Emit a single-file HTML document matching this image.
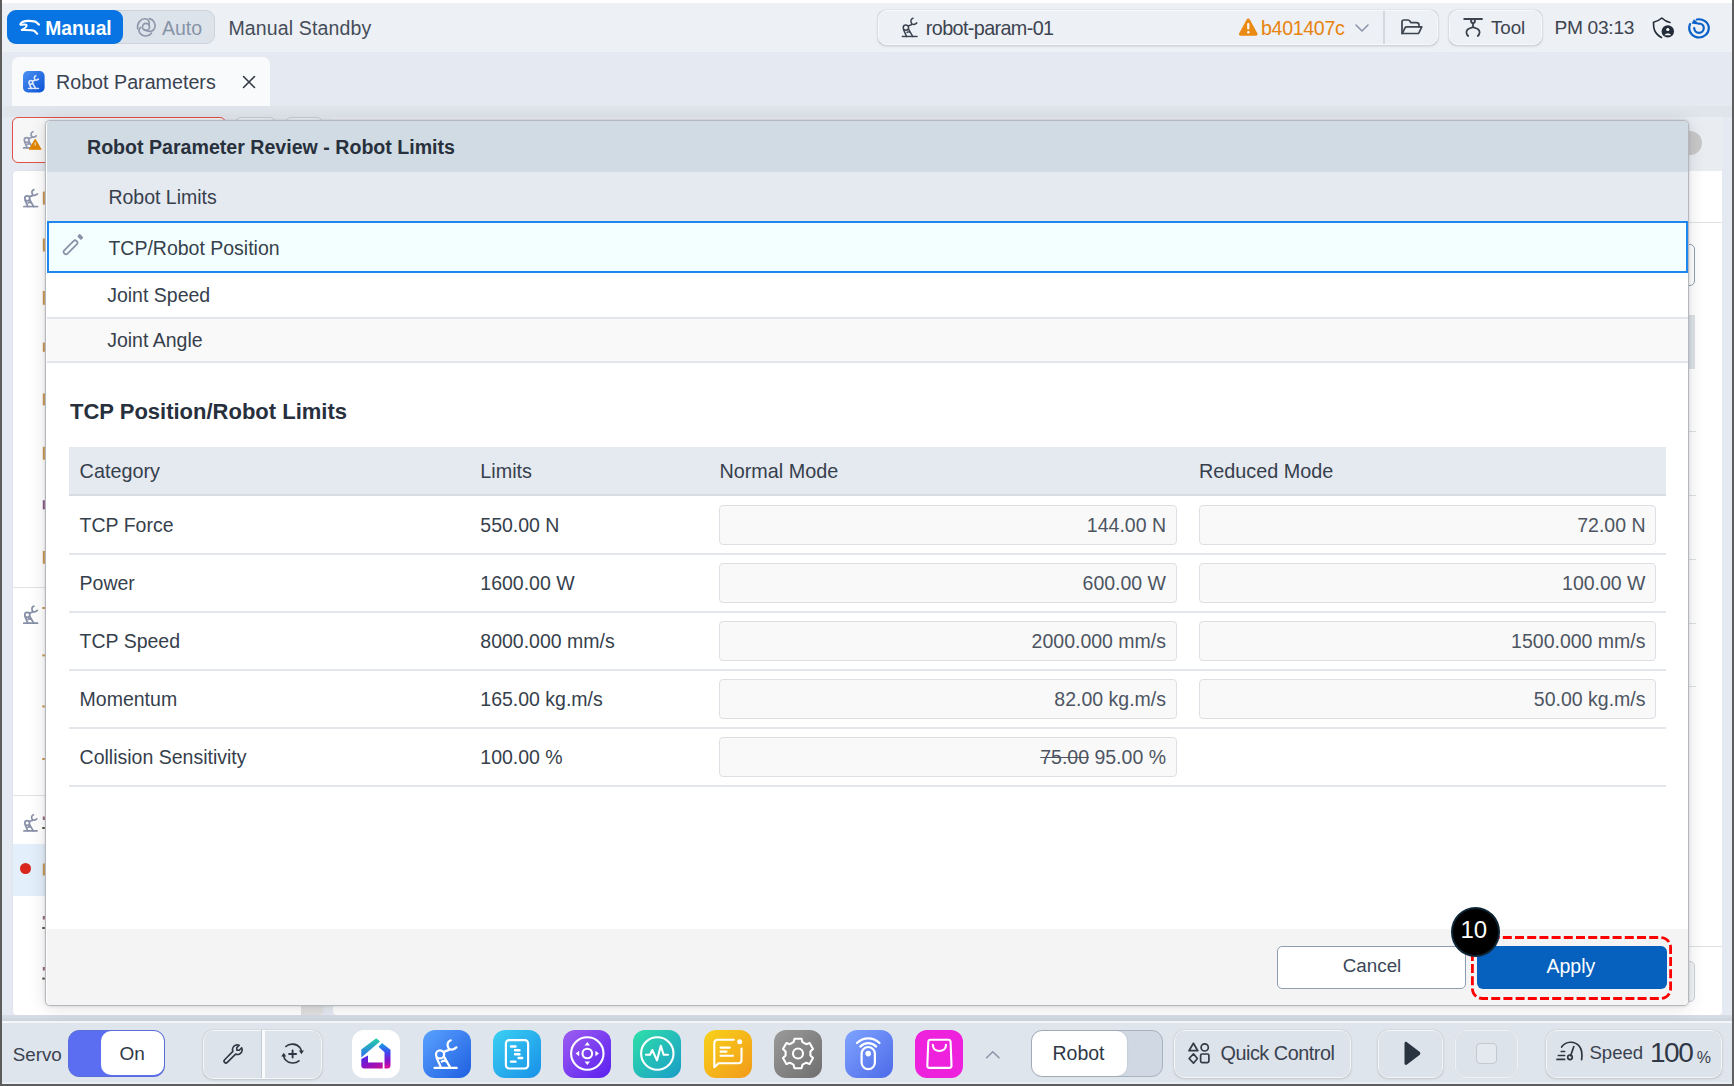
<!DOCTYPE html>
<html><head><meta charset="utf-8">
<style>
*{box-sizing:border-box;margin:0;padding:0}
html,body{width:1734px;height:1086px;overflow:hidden}
body{position:relative;background:#e5e9f1;font-family:"Liberation Sans",sans-serif;color:#2b3442}
.a{position:absolute}
.t{position:absolute;white-space:nowrap;line-height:1;font-size:19.5px}
.b{font-weight:bold}
svg{position:absolute;overflow:visible}
</style></head><body>
<!-- ===== frame ===== -->
<div class="a" style="left:0;top:0;width:1734px;height:52px;background:#edf0f4"></div>
<div class="a" style="left:0;top:0;width:1734px;height:3px;background:#ffffff"></div>
<div class="a" style="left:0;top:0;width:1.5px;height:1086px;background:#5c5c5c"></div>
<div class="a" style="left:1732px;top:0;width:2px;height:1086px;background:#5e5e5e"></div>

<!-- ===== top bar ===== -->
<div class="a" style="left:7px;top:10px;width:208px;height:34px;border-radius:9px;background:#dde3ea;border:1px solid #cdd3db"></div>
<div class="a" style="left:7px;top:10px;width:116px;height:34px;border-radius:9px;background:#0874e3"></div>
<div class="t b" style="left:45.3px;top:18.6px;font-size:19.3px;color:#fff">Manual</div>
<div class="t" style="left:162px;top:19px;font-size:19.5px;color:#8794a8">Auto</div>
<div class="t" style="left:228.4px;top:18.8px;font-size:19.5px;letter-spacing:0.15px;color:#454d5a">Manual Standby</div>

<div class="a" style="left:878px;top:10px;width:560px;height:35px;border-radius:8px;background:#edf0f4;border:1.5px solid #f7f9fb;box-shadow:0 0 1px rgba(0,0,0,.25),0 1px 3px rgba(0,0,0,.15)"></div>
<div class="a" style="left:1383px;top:11px;width:2px;height:33px;background:#d4d9e0"></div>
<div class="t" style="left:925.8px;top:19px;font-size:19.8px;letter-spacing:-0.62px;color:#3d4450">robot-param-01</div>
<div class="t" style="left:1261px;top:18.9px;font-size:19.6px;letter-spacing:-0.33px;color:#e8830f">b401407c</div>

<div class="a" style="left:1449px;top:10px;width:93px;height:35px;border-radius:8px;background:#edf0f4;border:1.5px solid #f7f9fb;box-shadow:0 0 1px rgba(0,0,0,.25),0 1px 3px rgba(0,0,0,.15)"></div>
<div class="t" style="left:1491px;top:19.3px;font-size:18.8px;letter-spacing:-0.1px;color:#3d4450">Tool</div>
<div class="t" style="left:1554.4px;top:18.1px;font-size:19.2px;letter-spacing:-0.3px;color:#3d4450">PM 03:13</div>

<!-- ===== tab ===== -->
<div class="a" style="left:12px;top:57px;width:258px;height:49px;border-radius:7px 7px 0 0;background:#f9fafb"></div>
<div class="t" style="left:56px;top:72.8px;font-size:19.7px;color:#3a4250">Robot Parameters</div>

<!-- ===== background content ===== -->
<div class="a" style="left:3px;top:106px;width:1729px;height:11px;background:#e0e4eb"></div>
<!-- left list card -->
<div class="a" style="left:13px;top:171px;width:310px;height:844px;background:#ffffff;border-radius:4px;box-shadow:0 0 2px rgba(0,0,0,.08)"></div>
<div class="a" style="left:13px;top:587px;width:310px;height:1px;background:#dfe3e8"></div>
<div class="a" style="left:13px;top:795px;width:310px;height:1px;background:#dfe3e8"></div>
<div class="a" style="left:13px;top:844px;width:310px;height:52px;background:#e3effa"></div>
<div class="a" style="left:20px;top:863px;width:11px;height:11px;border-radius:50%;background:#d9261c"></div>
<!-- red item -->
<div class="a" style="left:12px;top:117px;width:214px;height:46px;border-radius:6px;background:#f7f7f7;border:1.8px solid #e05248"></div>
<div class="a" style="left:235px;top:117px;width:41px;height:46px;border-radius:6px;background:#eef1f5;border:1px solid #c8ced6"></div>
<div class="a" style="left:285px;top:117px;width:38px;height:46px;border-radius:6px;background:#eef1f5;border:1px solid #c8ced6"></div>
<div class="a" style="left:301px;top:985px;width:22px;height:30px;background:#e0e0e0;border-radius:0 0 4px 0"></div>
<!-- right panel -->
<div class="a" style="left:333px;top:117px;width:1389px;height:898px;background:#ffffff;border-radius:4px"></div>
<div class="a" style="left:333px;top:117px;width:1389px;height:54px;background:#e9ecf1;border-radius:4px 4px 0 0"></div>
<div class="a" style="left:1678px;top:131px;width:24px;height:24px;border-radius:50%;background:#c8c8c8"></div>
<div class="a" style="left:333px;top:222px;width:1389px;height:1px;background:#e0e4e9"></div>
<div class="a" style="left:1660px;top:244px;width:35px;height:42px;border:1.5px solid #8fa0b5;border-radius:5px;background:#fff"></div>
<div class="a" style="left:1660px;top:315px;width:35px;height:54px;background:#dde2e8"></div>
<div class="a" style="left:1660px;top:431px;width:36px;height:1px;background:#dde1e6"></div>
<div class="a" style="left:1660px;top:495px;width:36px;height:1px;background:#dde1e6"></div>
<div class="a" style="left:1660px;top:558.5px;width:36px;height:1px;background:#dde1e6"></div>
<div class="a" style="left:1660px;top:623px;width:36px;height:1px;background:#dde1e6"></div>
<div class="a" style="left:1660px;top:686px;width:36px;height:1px;background:#dde1e6"></div>
<div class="a" style="left:1660px;top:946px;width:62px;height:1px;background:#dde1e6"></div>
<div class="a" style="left:1660px;top:961px;width:35px;height:41px;border:1px solid #ccd2da;border-radius:5px;background:#f2f3f5"></div>

<!-- bg icons -->
<svg width="1734" height="1086" style="left:0;top:0" viewBox="0 0 1734 1086">
<defs>
<symbol id="rbb" viewBox="-1 -1 17 21"><g fill="none" stroke="currentColor" stroke-width="1.9" stroke-linecap="round" stroke-linejoin="round">
<path d="M0,18.8H14.8"/><circle cx="3.7" cy="9.8" r="2.7"/><path d="M1.4,12 L4.4,18.8 M6.3,11.3 L10.6,18.8 M4.8,14.6 Q6.6,13.4 8,14.6"/>
<path d="M6.1,8.2 C7.4,7.4 8.6,7.1 9.6,6.8"/><path d="M10.8,0.4 C8.6,1.1 8.1,3.6 9.4,5.6 C10.6,7.2 12.7,6.8 14.6,5.1"/></g></symbol>
</defs>
<use href="#rbb" x="22.5" y="130.5" width="15" height="18.5" style="color:#8f98ae"/>
<path d="M35.2,139.6 L40.9,149.2 H29.5 Z" fill="#e08400" stroke="#e08400" stroke-width="1.2" stroke-linejoin="round"/>
<rect x="34.6" y="142.3" width="1.2" height="3.5" fill="#f6d9a8"/>
<use href="#rbb" x="22.8" y="188.3" width="16" height="19.5" style="color:#8890a8"/>
<use href="#rbb" x="22.8" y="604.8" width="16" height="19.5" style="color:#8890a8"/>
<use href="#rbb" x="22.8" y="813.5" width="15.5" height="18.5" style="color:#8890a8"/>
<g fill="#c99752">
<rect x="42.8" y="191.6" width="2" height="13"/>
<rect x="42.8" y="238.5" width="2" height="13"/>
<rect x="42.8" y="291" width="2" height="13.8"/>
<rect x="42.8" y="342.6" width="2" height="9.2"/>
<rect x="42.8" y="393.4" width="2" height="12"/>
<rect x="42.8" y="446.8" width="2" height="12.9"/>
<rect x="42.8" y="500.2" width="2" height="9.2" fill="#8a5a8a"/>
<rect x="42.8" y="550.9" width="2" height="12.9"/>
<rect x="42.3" y="607" width="2.5" height="2"/>
<rect x="42.3" y="654.4" width="2.5" height="2"/>
<rect x="42.3" y="705.4" width="2.5" height="2"/>
<rect x="42.3" y="758" width="2.5" height="2"/>
<rect x="42.8" y="816.5" width="2" height="3.5" fill="#9a6a7a"/>
<rect x="42.3" y="827" width="2.5" height="2" fill="#554"/>
<rect x="42.8" y="863.5" width="2" height="12"/>
<rect x="42.8" y="916" width="2" height="3.5" fill="#9a6a7a"/>
<rect x="42.3" y="927" width="2.5" height="2" fill="#554"/>
<rect x="42.8" y="967" width="2" height="3.5" fill="#9a6a7a"/>
<rect x="42.3" y="977.6" width="2.5" height="2" fill="#554"/>
</g>
</svg>
<!-- end bg -->
<!-- ===== bottom bar ===== -->
<div class="a" style="left:2px;top:1015px;width:1730px;height:6px;background:linear-gradient(#d9dee6,#ccd3dc)"></div>
<div class="a" style="left:2px;top:1021px;width:1730px;height:2px;background:#f4f6f9"></div>
<div class="a" style="left:2px;top:1023px;width:1730px;height:61px;background:#dfe5ec"></div>
<div class="a" style="left:2px;top:1082px;width:1730px;height:2px;background:#e9eef4"></div>
<div class="a" style="left:0;top:1084.2px;width:1734px;height:1.8px;background:#5e5e5e"></div>

<!-- ===== MODAL ===== -->
<div id="modal" class="a" style="left:45px;top:120px;width:1644px;height:886px;background:#fff;border:1.5px solid #b4b8be;border-radius:5px;overflow:hidden;box-shadow:0 0 3px rgba(0,0,0,.15),0 2px 18px rgba(0,0,0,.12)">
</div>
<!-- bottom inner -->
<div class="t" style="left:12.7px;top:1046px;font-size:18.8px;color:#3a4250">Servo</div>
<div class="a" style="left:67.5px;top:1029.5px;width:97px;height:47px;border-radius:11px;background:#5b6ef2;border:1.5px solid #5a6cd8"></div>
<div class="a" style="left:101px;top:1031px;width:62.5px;height:44px;border-radius:10px;background:#fff"></div>
<div class="t" style="left:119.6px;top:1044.2px;font-size:19px;color:#2f3846">On</div>
<div class="a" style="left:203px;top:1029.5px;width:118.5px;height:49px;border-radius:10px;background:#dde3ea;border:1.5px solid #f3f6f9;box-shadow:0 0 1px rgba(0,0,0,.25),0 1px 3px rgba(0,0,0,.12)"></div>
<div class="a" style="left:260.5px;top:1030px;width:4px;height:48px;background:#fafbfc;border-left:1.5px solid #c2c9d2"></div>
<div class="a" style="left:352px;top:1029.5px;width:48px;height:48px;border-radius:12px;background:#ffffff"></div>
<div class="a" style="left:422.5px;top:1029.5px;width:48px;height:48px;border-radius:12px;background:linear-gradient(135deg,#5aa2ff,#1f5fe0)"></div>
<div class="a" style="left:493px;top:1029.5px;width:48px;height:48px;border-radius:12px;background:linear-gradient(135deg,#3ad0f2,#1890e8)"></div>
<div class="a" style="left:563px;top:1029.5px;width:48px;height:48px;border-radius:12px;background:linear-gradient(135deg,#9d5ef0,#5a1ff0)"></div>
<div class="a" style="left:633px;top:1029.5px;width:48px;height:48px;border-radius:12px;background:linear-gradient(135deg,#2fe0a8,#1a9cc8)"></div>
<div class="a" style="left:703.5px;top:1029.5px;width:48px;height:48px;border-radius:12px;background:linear-gradient(135deg,#f8d21a,#f29a1a)"></div>
<div class="a" style="left:774px;top:1029.5px;width:48px;height:48px;border-radius:12px;background:linear-gradient(135deg,#9a9a9a,#6f6f6f)"></div>
<div class="a" style="left:844.5px;top:1029.5px;width:48px;height:48px;border-radius:12px;background:linear-gradient(135deg,#7fa4ff,#4d6ae8)"></div>
<div class="a" style="left:915px;top:1029.5px;width:48px;height:48px;border-radius:12px;background:#ee22dd"></div>
<div class="a" style="left:1031px;top:1030px;width:131.5px;height:46.5px;border-radius:11px;background:#cfd8e3;border:1.5px solid #a9b3c0"></div>
<div class="a" style="left:1032px;top:1031px;width:95px;height:44.5px;border-radius:10px;background:#fff;box-shadow:0 0 2px rgba(0,0,0,.15)"></div>
<div class="t" style="left:1052.5px;top:1044px;font-size:19.5px;color:#2f3846">Robot</div>
<div class="a" style="left:1174px;top:1029.5px;width:177px;height:48.5px;border-radius:10px;background:#dde3ea;border:1.5px solid #f3f6f9;box-shadow:0 0 1px rgba(0,0,0,.25),0 1px 3px rgba(0,0,0,.12)"></div>
<div class="t" style="left:1220.5px;top:1044.2px;font-size:19.8px;letter-spacing:-0.45px;color:#3a4250">Quick Control</div>
<div class="a" style="left:1378px;top:1029.5px;width:65px;height:48.5px;border-radius:10px;background:#dde3ea;border:1.5px solid #f3f6f9;box-shadow:0 0 1px rgba(0,0,0,.25),0 1px 3px rgba(0,0,0,.12)"></div>
<div class="a" style="left:1455px;top:1029.5px;width:63px;height:48.5px;border-radius:10px;background:#dde3ea;border:1.5px solid #eef1f5;box-shadow:0 0 1px rgba(0,0,0,.12)"></div>
<div class="a" style="left:1476px;top:1043px;width:21px;height:21px;border-radius:4px;border:1.5px solid #c2c9d2;background:#e4e9ef"></div>
<div class="a" style="left:1546px;top:1029.5px;width:175.5px;height:48.5px;border-radius:10px;background:#dde3ea;border:1.5px solid #f3f6f9;box-shadow:0 0 1px rgba(0,0,0,.25),0 1px 3px rgba(0,0,0,.12)"></div>
<div class="t" style="left:1589.4px;top:1043.7px;font-size:18.6px;color:#3a4250">Speed</div>
<div class="t" style="left:1650px;top:1038.6px;font-size:28px;letter-spacing:-1.5px;color:#2f3846">100</div>
<div class="t" style="left:1696.8px;top:1049.6px;font-size:16px;color:#3a4250">%</div>
<!-- end bottom -->
<!-- modal inner -->
<div class="a" style="left:47px;top:121px;width:1641px;height:51px;background:#d1dbe3;border-radius:4px 4px 0 0"></div>
<div class="t b" style="left:87px;top:137.6px;font-size:19.6px;color:#27303c">Robot Parameter Review - Robot Limits</div>
<div class="a" style="left:47px;top:172px;width:1641px;height:49px;background:#e5e9f0"></div>
<div class="t" style="left:108.4px;top:187.6px;color:#363f4c">Robot Limits</div>
<div class="a" style="left:47px;top:221px;width:1641px;height:52px;background:#f3fffe;border:2px solid #1d87ef"></div>
<div class="t" style="left:108.4px;top:239.1px;color:#363f4c">TCP/Robot Position</div>
<div class="t" style="left:107.2px;top:286.4px;color:#363f4c">Joint Speed</div>
<div class="a" style="left:47px;top:317px;width:1641px;height:2px;background:#e1e5ea"></div>
<div class="a" style="left:47px;top:319px;width:1641px;height:42px;background:#f9f9f9"></div>
<div class="t" style="left:107.2px;top:330.6px;color:#363f4c">Joint Angle</div>
<div class="a" style="left:47px;top:361px;width:1641px;height:2px;background:#e1e5ea"></div>
<div class="t b" style="left:70px;top:401.1px;font-size:22px;color:#27303c">TCP Position/Robot Limits</div>
<div class="a" style="left:69px;top:447px;width:1597px;height:49px;background:#e5e9f0;border-bottom:2px solid #d8dde4"></div>
<div class="t" style="left:79.6px;top:461.7px;font-size:19.8px;color:#363f4c">Category</div>
<div class="t" style="left:480.3px;top:461.7px;font-size:19.8px;color:#363f4c">Limits</div>
<div class="t" style="left:719.5px;top:461.7px;font-size:19.8px;color:#363f4c">Normal Mode</div>
<div class="t" style="left:1199px;top:461.7px;font-size:19.8px;color:#363f4c">Reduced Mode</div>
<div class="a" style="left:69px;top:553px;width:1597px;height:2px;background:#e3e7ec"></div>
<div class="t" style="left:79.6px;top:516.1px;color:#363f4c">TCP Force</div>
<div class="t" style="left:480.3px;top:516.1px;color:#363f4c">550.00 N</div>
<div class="a" style="left:718.5px;top:505px;width:458px;height:40px;background:#f9f9f9;border:1.5px solid #dce0e5;border-radius:4px"></div>
<div class="a" style="left:1198.5px;top:505px;width:457px;height:40px;background:#f9f9f9;border:1.5px solid #dce0e5;border-radius:4px"></div>
<div class="t" style="right:568px;top:516.1px;color:#4d5562">144.00 N</div>
<div class="t" style="right:88.5px;top:516.1px;color:#4d5562">72.00 N</div>
<div class="a" style="left:69px;top:611px;width:1597px;height:2px;background:#e3e7ec"></div>
<div class="t" style="left:79.6px;top:574.1px;color:#363f4c">Power</div>
<div class="t" style="left:480.3px;top:574.1px;color:#363f4c">1600.00 W</div>
<div class="a" style="left:718.5px;top:563px;width:458px;height:40px;background:#f9f9f9;border:1.5px solid #dce0e5;border-radius:4px"></div>
<div class="a" style="left:1198.5px;top:563px;width:457px;height:40px;background:#f9f9f9;border:1.5px solid #dce0e5;border-radius:4px"></div>
<div class="t" style="right:568px;top:574.1px;color:#4d5562">600.00 W</div>
<div class="t" style="right:88.5px;top:574.1px;color:#4d5562">100.00 W</div>
<div class="a" style="left:69px;top:669px;width:1597px;height:2px;background:#e3e7ec"></div>
<div class="t" style="left:79.6px;top:632.1px;color:#363f4c">TCP Speed</div>
<div class="t" style="left:480.3px;top:632.1px;color:#363f4c">8000.000 mm/s</div>
<div class="a" style="left:718.5px;top:621px;width:458px;height:40px;background:#f9f9f9;border:1.5px solid #dce0e5;border-radius:4px"></div>
<div class="a" style="left:1198.5px;top:621px;width:457px;height:40px;background:#f9f9f9;border:1.5px solid #dce0e5;border-radius:4px"></div>
<div class="t" style="right:568px;top:632.1px;color:#4d5562">2000.000 mm/s</div>
<div class="t" style="right:88.5px;top:632.1px;color:#4d5562">1500.000 mm/s</div>
<div class="a" style="left:69px;top:727px;width:1597px;height:2px;background:#e3e7ec"></div>
<div class="t" style="left:79.6px;top:690.1px;color:#363f4c">Momentum</div>
<div class="t" style="left:480.3px;top:690.1px;color:#363f4c">165.00 kg.m/s</div>
<div class="a" style="left:718.5px;top:679px;width:458px;height:40px;background:#f9f9f9;border:1.5px solid #dce0e5;border-radius:4px"></div>
<div class="a" style="left:1198.5px;top:679px;width:457px;height:40px;background:#f9f9f9;border:1.5px solid #dce0e5;border-radius:4px"></div>
<div class="t" style="right:568px;top:690.1px;color:#4d5562">82.00 kg.m/s</div>
<div class="t" style="right:88.5px;top:690.1px;color:#4d5562">50.00 kg.m/s</div>
<div class="a" style="left:69px;top:785px;width:1597px;height:2px;background:#e3e7ec"></div>
<div class="t" style="left:79.6px;top:748.1px;color:#363f4c">Collision Sensitivity</div>
<div class="t" style="left:480.3px;top:748.1px;color:#363f4c">100.00 %</div>
<div class="a" style="left:718.5px;top:737px;width:458px;height:40px;background:#f9f9f9;border:1.5px solid #dce0e5;border-radius:4px"></div>
<div class="t" style="right:568px;top:748.1px;color:#4d5562"><span style="text-decoration:line-through">75.00</span> 95.00 %</div>
<div class="a" style="left:47px;top:929px;width:1641px;height:76px;background:#f4f4f4;border-radius:0 0 4px 4px"></div>
<div class="a" style="left:1277px;top:945.5px;width:189px;height:43px;background:#fff;border:1.5px solid #8e9db0;border-radius:5px"></div>
<div class="t" style="left:1342.8px;top:957px;font-size:18.8px;color:#3b4758">Cancel</div>
<div class="a" style="left:1477px;top:945.5px;width:190px;height:43px;background:#0660be;border-radius:6px"></div>
<div class="t" style="left:1546.5px;top:957.1px;font-size:19.5px;color:#fff">Apply</div>
<svg width="1734" height="1086" style="left:0;top:0"><rect x="1472.4" y="937.5" width="198.2" height="61" rx="10" fill="none" stroke="#ff0000" stroke-width="2.8" stroke-dasharray="9 3.2" stroke-dashoffset="4"/></svg>
<div class="a" style="left:1451px;top:907px;width:48.5px;height:49.5px;border-radius:50%;background:#000;border:2px solid #0e2535"></div>
<div class="t" style="left:1460.5px;top:918px;font-size:24px;color:#fff">10</div>
<!-- end modal -->
<!-- fg icons -->
<svg width="1734" height="1086" style="left:0;top:0" viewBox="0 0 1734 1086">
<defs>
<symbol id="rb" viewBox="-1 -1 17 21"><g fill="none" stroke="currentColor" stroke-width="1.5" stroke-linecap="round" stroke-linejoin="round">
<path d="M0,18.8H14.8"/><circle cx="3.7" cy="9.8" r="2.7"/><path d="M1.4,12 L4.4,18.8 M6.3,11.3 L10.6,18.8 M4.8,14.6 Q6.6,13.4 8,14.6"/>
<path d="M6.1,8.2 C7.4,7.4 8.6,7.1 9.6,6.8"/><path d="M10.8,0.4 C8.6,1.1 8.1,3.6 9.4,5.6 C10.6,7.2 12.7,6.8 14.6,5.1"/></g></symbol>
<symbol id="rbt" viewBox="-1 -1 17 21"><g fill="none" stroke="currentColor" stroke-width="2.3" stroke-linecap="round" stroke-linejoin="round">
<path d="M0,18.8H14.8"/><circle cx="3.7" cy="9.8" r="2.7"/><path d="M1.4,12 L4.4,18.8 M6.3,11.3 L10.6,18.8"/>
<path d="M6.1,8.2 C7.4,7.4 8.6,7.1 9.6,6.8"/><path d="M10.8,0.4 C8.6,1.1 8.1,3.6 9.4,5.6 C10.6,7.2 12.7,6.8 14.6,5.1"/></g></symbol>
<linearGradient id="gTab" x1="0" y1="0" x2="1" y2="1"><stop offset="0" stop-color="#4e93f2"/><stop offset="1" stop-color="#0850d6"/></linearGradient>
<linearGradient id="gHome1" x1="0" y1="0" x2="0" y2="1"><stop offset="0" stop-color="#22d0a8"/><stop offset="1" stop-color="#2f6af0"/></linearGradient>
<linearGradient id="gHome2" x1="0" y1="0" x2="0" y2="1"><stop offset="0" stop-color="#1aa6e0"/><stop offset="0.35" stop-color="#3b4cf0"/><stop offset="0.7" stop-color="#8a10c8"/><stop offset="1" stop-color="#e0109a"/></linearGradient>
<linearGradient id="gHome3" x1="0" y1="0" x2="1" y2="1"><stop offset="0" stop-color="#3a30f0"/><stop offset="0.5" stop-color="#8a10c4"/><stop offset="1" stop-color="#c8109a"/></linearGradient>
</defs>

<!-- Manual hand icon -->
<g fill="none" stroke="#fff" stroke-width="2.1" stroke-linecap="round" stroke-linejoin="round">
<path d="M20.3,24.3 C21.5,21.5 25,20.8 29,20.9 C31.5,21 33.5,21.3 35.5,21.6 L39,24.6"/>
<path d="M21,24.8 C23,24.6 26,24.2 26.5,25 C27,26.2 24.5,28.5 21.8,30 C26,30.2 31.5,29.8 34.5,31 L37.2,33.7"/>
</g>
<!-- Auto icon -->
<g fill="none" stroke="#8c96a9" stroke-width="1.6" stroke-linecap="round">
<circle cx="146" cy="26.9" r="3.5"/>
<path d="M137.6,28.8 C136.8,22.5 141,18.6 145.2,18.8 C148.5,19 150,22 148.9,25.2"/>
<path d="M149.3,18.6 C153.5,19.6 155.8,23.5 154.8,27.8 C153.8,31.3 149.5,32.8 144.6,29.6"/>
<path d="M151.5,33.2 C148.7,36.8 142.8,37 140.2,33.6 C138.5,31.3 139,28.8 140.8,27.4"/>
</g>
<!-- top bar robot -->
<use href="#rb" x="901.2" y="16.8" width="17" height="21" style="color:#3a4250"/>
<!-- warning triangle -->
<path d="M1248.3,18.5 C1249,18.5 1249.4,18.9 1249.8,19.5 L1257.3,33.3 C1257.9,34.5 1257.2,35.8 1255.8,35.8 L1240.7,35.8 C1239.3,35.8 1238.6,34.5 1239.2,33.3 L1246.7,19.5 C1247.1,18.9 1247.6,18.5 1248.3,18.5Z" fill="#ea8a12"/>
<rect x="1247.2" y="23" width="2.2" height="6.5" rx="1" fill="#fff"/><circle cx="1248.3" cy="32.2" r="1.2" fill="#fff"/>
<!-- chevron -->
<path d="M1356,25 L1362,31 L1368,25" fill="none" stroke="#8a93a8" stroke-width="1.5" stroke-linecap="round" stroke-linejoin="round"/>
<!-- folder -->
<g fill="none" stroke="#3d4450" stroke-width="1.7" stroke-linejoin="round" stroke-linecap="round">
<path d="M401.5,34 L401.5,22.5 C401.5,21 402.5,20 404,20 L1407.5,20" transform="translate(0,0)" style="display:none"/>
<path d="M1402,33.5 V22 C1402,20.8 1402.8,20 1404,20 H1408 C1409,20 1409.5,20.5 1410,21.3 L1410.8,22.6 H1416.5 C1418,22.6 1419,23.6 1419,25 V27"/>
<path d="M1402.3,33.5 L1405,27.8 C1405.4,27 1406,26.8 1406.8,26.8 H1421.8 L1418.6,33.5 Z"/>
</g>
<!-- tool gripper -->
<g fill="none" stroke="#3d4450" stroke-width="1.8" stroke-linecap="round" stroke-linejoin="round">
<path d="M1464.2,19 H1482"/><circle cx="1473" cy="21" r="2"/><path d="M1473,23 V27"/>
<path d="M1468.2,36 C1465.8,33.8 1465.8,30.8 1468.2,29 L1473,27.2 L1477.8,29 C1480.2,30.8 1480.2,33.8 1477.8,36"/>
</g>
<!-- shield user -->
<g fill="none" stroke="#222b38" stroke-width="1.6" stroke-linejoin="round" stroke-linecap="round">
<path d="M1670,22.5 C1667,22 1664.5,20.5 1661.8,18 C1659,20.5 1656.5,21.8 1653.5,22.3 C1653.5,27 1653.3,33 1661.5,37.5"/>
</g>
<circle cx="1667.8" cy="31.4" r="6.2" fill="#222b38"/>
<circle cx="1667.8" cy="29.5" r="1.6" fill="#fff"/><path d="M1664.6,35.2 C1665.2,32.8 1670.4,32.8 1671,35.2 Z" fill="#fff"/>
<!-- blue sync icon -->
<g fill="none" stroke="#0a62c8" stroke-width="2.2" stroke-linecap="round">
<path d="M1696.8,19.5 C1702.5,18.3 1708.8,22 1708.8,28 C1708.8,33.5 1704.3,37.5 1699,37.5 C1693.6,37.5 1689.2,33.2 1689.2,28 C1689.2,26.6 1689.5,25.3 1690,24.1"/>
<path d="M1698.8,23.5 C1701.8,23.3 1703.8,25.5 1703.8,28 C1703.8,30.7 1701.6,32.8 1699,32.8 C1696.3,32.8 1694.2,30.6 1694.2,28"/>
</g>
<path d="M1694,19.2 L1700,24.8 L1691.5,23.6 Z" fill="#0a62c8"/>

<!-- tab icon -->
<rect x="23" y="71" width="21.6" height="21.4" rx="5" fill="url(#gTab)"/>
<use href="#rbt" x="27.6" y="74.8" width="11.8" height="14.6" style="color:#dce7fb"/>
<!-- close X -->
<path d="M243.5,76.5 L254.5,87.5 M254.5,76.5 L243.5,87.5" stroke="#333a44" stroke-width="1.6" stroke-linecap="round"/>

<!-- pencil -->
<rect x="61.75" y="245" width="17.5" height="4.6" rx="2.2" transform="rotate(-45 70.5 247.3)" fill="none" stroke="#8890a8" stroke-width="1.7"/>
<rect x="77.6" y="235.1" width="5.4" height="3.6" rx="0.9" transform="rotate(45 80.3 236.9)" fill="#8890a8"/>
<!-- wrench -->
<path d="M239.2,1045.3 C236.8,1044.2 233.8,1045.2 232.8,1047.8 C232.3,1049 232.4,1050.3 232.9,1051.4 L224.6,1059.7 C223.8,1060.5 223.8,1061.6 224.6,1062.4 C225.4,1063.2 226.5,1063.2 227.3,1062.4 L235.6,1054.1 C236.7,1054.6 238,1054.7 239.2,1054.2 C241.8,1053.2 242.8,1050.2 241.7,1047.8 L239.2,1050.3 L236.9,1050.1 L236.7,1047.8 Z" fill="none" stroke="#2e3642" stroke-width="1.6" stroke-linejoin="round"/>
<!-- rotate plus -->
<g fill="none" stroke="#2e3642" stroke-width="1.6" stroke-linecap="round">
<path d="M285.8,1046.5 C289.5,1043 296.5,1043.3 299.8,1047.5 C300.8,1048.8 301.3,1050 301.5,1051.3"/>
<path d="M299,1060.8 C295.3,1064 289,1063.8 285.6,1060 C284.5,1058.8 284,1057.5 283.7,1056"/>
<path d="M292.6,1050.5 V1057.5 M289.1,1054 H296.1" stroke-width="1.9"/>
</g>
<path d="M298.9,1050.5 L304,1050.5 L301.4,1054.2 Z M281.2,1056.5 L286.3,1056.5 L283.7,1052.8 Z" fill="#2e3642"/>

<!-- app: home -->
<path d="M361.3,1049.6 L375.2,1038.9 Q376.3,1038.2 377.3,1039 L380,1041.6 L361.3,1057.6 Z" fill="url(#gHome1)"/>
<path d="M382,1043.1 L390.5,1049.8 V1065.2 Q390.5,1068.5 387.3,1068.5 H384.5 V1052.3 L378.5,1046.7 Z" fill="url(#gHome2)"/>
<path d="M361.3,1059 L368,1055.6 V1062.5 H382.7 V1068.5 H364.5 Q361.3,1068.5 361.3,1065.3 Z" fill="url(#gHome3)"/>
<!-- app: robot -->
<use href="#rb" x="433" y="1038.2" width="25.5" height="31.5" style="color:#fff"/>
<!-- app: doc -->
<g fill="none" stroke="#fff" stroke-width="2.2" stroke-linecap="round">
<rect x="505.9" y="1040.2" width="22.2" height="28.3" rx="3.2"/>
<path d="M511,1046.5 H515.5 M515,1050.3 H519.5 M515,1054.2 H519.5 M518.6,1058 H522.2 M511,1061.6 H515.5" stroke-width="2.4"/>
</g>
<!-- app: joystick -->
<g fill="none" stroke="#fff" stroke-width="2.1">
<circle cx="587.3" cy="1053.5" r="16.2"/><circle cx="587.3" cy="1053.5" r="4.8"/>
</g>
<path d="M587.3,1042 L590,1045.5 H584.6Z M587.3,1065 L590,1061.5 H584.6Z M575.7,1053.5 L579.2,1050.8 V1056.2Z M598.9,1053.5 L595.4,1050.8 V1056.2Z" fill="#fff"/>
<!-- app: monitor -->
<g fill="none" stroke="#fff" stroke-width="2.1" stroke-linecap="round" stroke-linejoin="round">
<circle cx="657.3" cy="1053.5" r="16.2"/>
<path d="M646,1054.7 H650 L652.3,1050 L657,1060.4 L660.8,1045.7 L663.6,1054.7 H668"/>
</g>
<!-- app: chat -->
<g fill="none" stroke="#fff" stroke-width="2.1" stroke-linecap="round" stroke-linejoin="round">
<path d="M733.8,1039.8 H717.6 C715.3,1039.8 714.3,1041 714.3,1043.3 V1067.3 L718.6,1063.3 H738.2 C740.2,1063.3 741.5,1062 741.5,1060 V1048.5"/>
<path d="M720.5,1047.6 H729.8 M720.5,1051.6 H726.5 M720.5,1055.8 H733"/>
</g>
<circle cx="739.7" cy="1041.7" r="2.5" fill="#fff"/>
<!-- app: settings gear -->
<g fill="none" stroke="#fff" stroke-width="2.1" stroke-linejoin="round">
<path d="M794.5,1040.5 H801.5 L802.5,1044 L806.2,1046 L809.6,1044.8 L813,1050.8 L810.4,1053.3 V1057.2 L813,1059.7 L809.6,1065.7 L806.2,1064.5 L802.5,1066.5 L801.5,1070 H794.5 L793.5,1066.5 L789.8,1064.5 L786.4,1065.7 L783,1059.7 L785.6,1057.2 V1053.3 L783,1050.8 L786.4,1044.8 L789.8,1046 L793.5,1044 Z" transform="translate(0,-1.8)"/>
<circle cx="798" cy="1053.5" r="5"/>
</g>
<!-- app: remote -->
<g fill="none" stroke="#fff" stroke-width="2.2" stroke-linecap="round">
<path d="M857,1043 C863.5,1036.8 873,1036.8 879.5,1043"/>
<path d="M860.3,1046.6 C865,1042 871.5,1042 876.2,1046.6"/>
<rect x="861.6" y="1047" width="13.3" height="22.2" rx="6.65"/>
</g>
<circle cx="868.2" cy="1053.6" r="2.8" fill="#fff"/>
<!-- app: bag -->
<g fill="none" stroke="#fff" stroke-width="2.1" stroke-linecap="round" stroke-linejoin="round">
<path d="M928.3,1042 C928.3,1040.6 929.2,1039.7 930.6,1039.7 H948.3 C949.7,1039.7 950.5,1040.6 950.6,1042 L951.5,1065.5 C951.6,1067 950.7,1067.9 949.2,1067.9 H929.5 C928,1067.9 927.2,1067 927.3,1065.5 Z"/>
<path d="M932.8,1044.7 C932.8,1053 946,1053 946,1044.7"/>
</g>
<!-- chevron up -->
<path d="M986.6,1057.8 L992.8,1051.8 L999,1057.8" fill="none" stroke="#8d96a8" stroke-width="1.6" stroke-linecap="round" stroke-linejoin="round"/>
<!-- quick control -->
<g fill="none" stroke="#333b47" stroke-width="1.7" stroke-linejoin="round">
<path d="M1193.4,1043.3 L1197.8,1050.7 H1189 Z"/>
<circle cx="1204.7" cy="1047.4" r="3.6"/>
<path d="M1193.3,1053.9 L1197.2,1058.5 L1193.3,1063.2 L1188.9,1058.5 Z" transform="translate(0.2,0)"/>
<rect x="1200.6" y="1054" width="8.3" height="8.6" rx="1.5"/>
</g>
<!-- play -->
<path d="M1404.5,1043.5 C1404.5,1042 1405.8,1041.4 1407,1042.2 L1419.5,1051.8 C1420.6,1052.6 1420.6,1054.2 1419.5,1055 L1407,1064.6 C1405.8,1065.4 1404.5,1064.8 1404.5,1063.3 Z" fill="#2a3340"/>
<!-- speed gauge -->
<g fill="none" stroke="#2e3642" stroke-width="1.7" stroke-linecap="round">
<path d="M1561.6,1047 C1565.5,1041 1575,1040.5 1579.5,1046.5 C1582,1049.8 1582.4,1054 1581.6,1059.7"/>
<path d="M1561.3,1051.5 H1564.6 M1558.4,1055.5 H1564.6 M1557,1059.4 H1564.6"/>
<path d="M1573.8,1046.5 L1570.6,1055.8"/>
<circle cx="1570" cy="1057.3" r="2.3"/>
</g>
</svg>
<!-- end fg -->
</body></html>
